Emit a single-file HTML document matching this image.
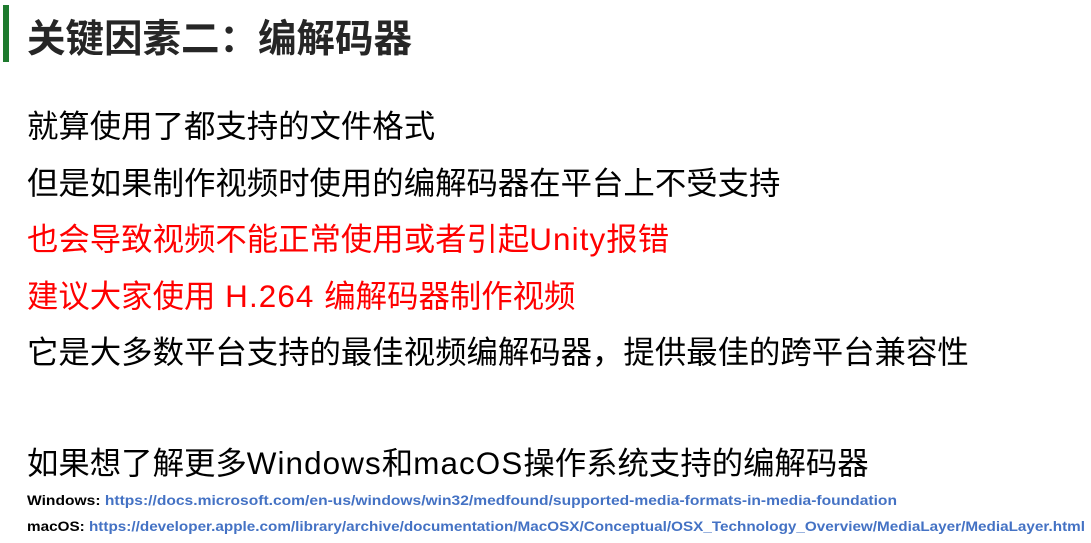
<!DOCTYPE html>
<html><head><meta charset="utf-8"><style>
body{margin:0;width:1091px;height:543px;background:#fff;overflow:hidden;position:relative;font-family:"Liberation Sans","Noto Sans CJK SC",sans-serif}
.bar{position:absolute;left:3px;top:5px;width:6px;height:57px;background:#1e7a2e}
.t{position:absolute;left:27px;top:16px;font-size:38.5px;font-weight:bold;color:#262626;line-height:48px;white-space:nowrap}
.l{position:absolute;left:27px;font-size:31.4px;line-height:40px;color:#000;white-space:nowrap}
.r{color:#ff0000}
.e{letter-spacing:1.1px}
svg{position:absolute;left:0;top:0}
</style></head><body>
<div class="bar"></div>
<div class="t">关键因素二：编解码器</div>
<div class="l" style="top:107px">就算使用了都支持的文件格式</div>
<div class="l" style="top:164px">但是如果制作视频时使用的编解码器在平台上不受支持</div>
<div class="l r" style="top:220px">也会导致视频不能正常使用或者引起<span class="e">Unity</span>报错</div>
<div class="l r" style="top:277px">建议大家使用<span class="e"> H.264 </span>编解码器制作视频</div>
<div class="l" style="top:333px">它是大多数平台支持的最佳视频编解码器，提供最佳的跨平台兼容性</div>
<div class="l" style="top:444px">如果想了解更多<span class="e">Windows</span>和<span class="e">macOS</span>操作系统支持的编解码器</div>
<svg width="1091" height="543" font-family="Liberation Sans, sans-serif" font-weight="bold" font-size="14">
<text x="27" y="505" textLength="870" lengthAdjust="spacingAndGlyphs"><tspan fill="#000">Windows: </tspan><tspan fill="#4472c4">https://docs.microsoft.com/en-us/windows/win32/medfound/supported-media-formats-in-media-foundation</tspan></text>
<text x="27" y="531" textLength="1058" lengthAdjust="spacingAndGlyphs"><tspan fill="#000">macOS: </tspan><tspan fill="#4472c4">https://developer.apple.com/library/archive/documentation/MacOSX/Conceptual/OSX_Technology_Overview/MediaLayer/MediaLayer.html</tspan></text>
</svg>
</body></html>
